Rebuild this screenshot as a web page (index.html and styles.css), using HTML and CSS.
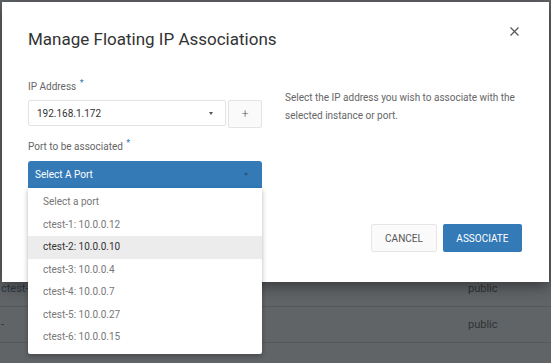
FILE: index.html
```html
<!DOCTYPE html>
<html>
<head>
<meta charset="utf-8">
<link rel="stylesheet" href="styles.css">
</head>
<body>
<div class="page">
  <div class="spacer"></div>
  <div class="trow"><span class="cell-name link">ctest-4</span><span class="cell-pool">public</span></div>
  <div class="trow"><span class="cell-name">-</span><span class="cell-pool">public</span></div>
  <div class="trow"><span class="cell-name"></span><span class="cell-pool"></span></div>
</div>

<div class="modal">
  <div class="modal-header">
    <h4 class="modal-title">Manage Floating IP Associations</h4>
    <svg class="close" width="9" height="9" viewBox="0 0 9 9"><path d="M0.5 0.5 L8.5 8.5 M8.5 0.5 L0.5 8.5" stroke="#555" stroke-width="1.2" fill="none"/></svg>
  </div>
  <div class="modal-body">
    <div class="form-col">
      <label class="label">IP Address <span class="req">*</span></label>
      <div class="ip-row">
        <div class="select">
          <span>192.168.1.172</span>
          <span class="caret"></span>
        </div>
        <div class="plus-btn">+</div>
      </div>
      <label class="label port-label">Port to be associated <span class="req">*</span></label>
      <div class="port-wrap">
        <div class="select-blue">
          <span>Select A Port</span>
          <span class="caret dark"></span>
        </div>
        <ul class="menu">
          <li>Select a port</li>
          <li>ctest-1: 10.0.0.12</li>
          <li class="active">ctest-2: 10.0.0.10</li>
          <li>ctest-3: 10.0.0.4</li>
          <li>ctest-4: 10.0.0.7</li>
          <li>ctest-5: 10.0.0.27</li>
          <li>ctest-6: 10.0.0.15</li>
        </ul>
      </div>
    </div>
    <p class="desc">Select the IP address you wish to associate with the selected instance or port.</p>
  </div>
  <div class="modal-footer">
    <div class="btn btn-default">CANCEL</div>
    <div class="btn btn-primary">ASSOCIATE</div>
  </div>
</div>
</body>
</html>
```

FILE: styles.css
```css
* { box-sizing: border-box; }
html, body {
  margin: 0;
  padding: 0;
  width: 551px;
  height: 363px;
  overflow: hidden;
  background: #616467;
  font-family: Roboto, "Liberation Sans", sans-serif;
}
.page {
  width: 551px;
}
.spacer { height: 271px; }
.trow {
  height: 36px;
  border-bottom: 1px solid #55585b;
  display: flex;
  align-items: center;
  font-size: 11px;
  color: #2f3234;
}
.cell-name {
  width: 468px;
  padding-left: 1px;
}
.cell-name.link { color: #2a3947; }
.cell-pool { flex: 1; }

.modal {
  position: absolute;
  left: 2px;
  top: 2px;
  width: 547px;
  height: 280px;
  background: #fff;
  box-shadow: 0 4px 14px rgba(0,0,0,0.45);
  display: flex;
  flex-direction: column;
}
.modal-header {
  display: flex;
  justify-content: space-between;
  align-items: flex-start;
  padding: 25px 30px 0 26px;
}
.modal-title {
  margin: 0;
  font-size: 17px;
  line-height: 24px;
  font-weight: 400;
  color: #333;
}
.close { display: block; margin-top: 0; }

.modal-body {
  display: flex;
  gap: 23px;
  padding: 29px 26px 0 26px;
}
.form-col {
  width: 236px;
  display: flex;
  flex-direction: column;
}
.label {
  display: block;
  height: 14px;
  font-size: 10px;
  line-height: 14px;
  color: #666;
  margin-bottom: 6px;
}
.req {
  color: #337ab7;
  font-size: 9px;
  line-height: 0;
  vertical-align: 4px;
  margin-left: 1px;
}
.port-label { margin-bottom: 7px; }
.ip-row {
  display: flex;
  gap: 2px;
  height: 28px;
  margin-bottom: 12px;
  align-items: flex-start;
}
.select {
  flex: 1;
  height: 26px;
  border: 1px solid #e3e3e3;
  border-radius: 2px;
  display: flex;
  align-items: center;
  justify-content: space-between;
  padding: 0 12px 0 8px;
  font-size: 10px;
  color: #333;
}
.caret {
  width: 0;
  height: 0;
  border-left: 2.5px solid transparent;
  border-right: 2.5px solid transparent;
  border-top: 3px solid #555;
}
.caret.dark { border-top-color: #2d5478; }
.plus-btn {
  width: 34px;
  height: 28px;
  border: 1px solid #e3e3e3;
  border-radius: 2px;
  background: #fafafa;
  display: flex;
  align-items: center;
  justify-content: center;
  font-size: 12px;
  font-weight: 300;
  color: #555;
}
.port-wrap { position: relative; }
.select-blue {
  height: 27px;
  background: #337ab7;
  border-radius: 3px 3px 0 0;
  display: flex;
  align-items: center;
  justify-content: space-between;
  padding: 0 14px 0 7px;
  font-size: 10px;
  color: #fff;
}
.menu {
  position: absolute;
  top: 100%;
  left: 0;
  width: 100%;
  margin: 0;
  padding: 3px 0 5px;
  list-style: none;
  background: #fff;
  box-shadow: 0 2px 5px rgba(0,0,0,0.3);
  border-radius: 0 0 2px 2px;
  z-index: 5;
}
.menu li {
  height: 22.5px;
  line-height: 22.5px;
  padding-left: 15px;
  font-size: 10px;
  color: #777;
}
.menu li.active {
  background: #ececec;
  color: #333;
}
.desc {
  margin: 9px 0 0 0;
  width: 240px;
  font-size: 10px;
  line-height: 17.5px;
  color: #666;
}
.modal-footer {
  margin-top: auto;
  display: flex;
  justify-content: flex-end;
  gap: 6px;
  padding: 0 27px 30px 0;
}
.btn {
  height: 28px;
  padding: 0 13px;
  display: flex;
  align-items: center;
  font-size: 10px;
  border-radius: 2px;
}
.btn-default {
  border: 1px solid #e6e6e6;
  background: #fafafa;
  color: #555;
}
.btn-primary {
  background: #337ab7;
  color: #fff;
  padding: 0 13.5px;
}
```
